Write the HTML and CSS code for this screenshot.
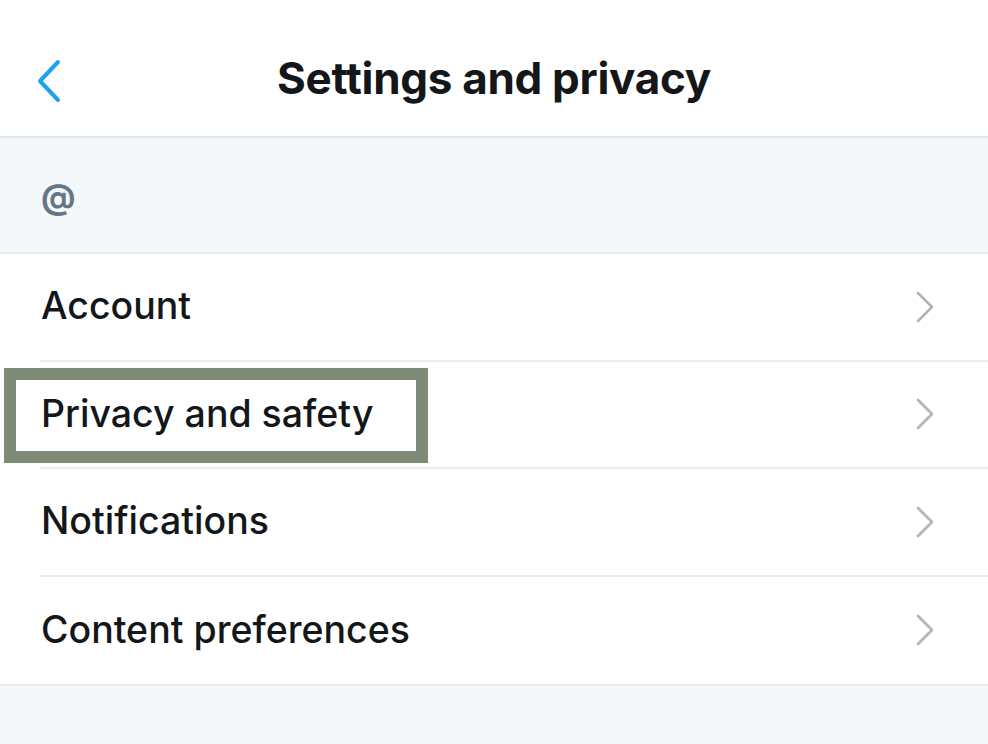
FILE: index.html
```html
<!DOCTYPE html>
<html>
<head>
<meta charset="utf-8">
<link rel="stylesheet" href="styles.css">
</head>
<body>
<div class="screen">
  <header class="topbar">
    <span class="back">
      <svg width="30" height="46" viewBox="0 0 30 46"><path d="M24 4 L6 23 L24 42" fill="none" stroke="#1da1f2" stroke-width="4" stroke-linecap="round" stroke-linejoin="round"/></svg>
    </span>
    <h1 class="title">Settings and privacy</h1>
  </header>
  <div class="handle">@</div>
  <ul class="list">
    <li class="row"><span class="label">Account</span><span class="chev"><svg width="22" height="34" viewBox="0 0 22 34"><path d="M4 3 L18 17 L4 31" fill="none" stroke="#adb5bc" stroke-width="2.6" stroke-linecap="round" stroke-linejoin="round"/></svg></span></li>
    <li class="row"><span class="label">Privacy and safety</span><span class="chev"><svg width="22" height="34" viewBox="0 0 22 34"><path d="M4 3 L18 17 L4 31" fill="none" stroke="#adb5bc" stroke-width="2.6" stroke-linecap="round" stroke-linejoin="round"/></svg></span><span class="highlight"></span></li>
    <li class="row"><span class="label">Notifications</span><span class="chev"><svg width="22" height="34" viewBox="0 0 22 34"><path d="M4 3 L18 17 L4 31" fill="none" stroke="#adb5bc" stroke-width="2.6" stroke-linecap="round" stroke-linejoin="round"/></svg></span></li>
    <li class="row last"><span class="label">Content preferences</span><span class="chev"><svg width="22" height="34" viewBox="0 0 22 34"><path d="M4 3 L18 17 L4 31" fill="none" stroke="#adb5bc" stroke-width="2.6" stroke-linecap="round" stroke-linejoin="round"/></svg></span></li>
  </ul>
  <div class="footer"></div>
</div>
</body>
</html>
```
FILE: styles.css
```css
* { box-sizing: border-box; }
html, body { margin: 0; padding: 0; }
body {
  width: 988px;
  height: 744px;
  overflow: hidden;
  background: #f5f8fa;
  font-family: Inter, "Noto Sans", sans-serif;
  color: #14171a;
}
.screen { display: flex; flex-direction: column; height: 744px; }
.topbar {
  height: 138px;
  background: #fff;
  border-bottom: 2px solid #e1e8ed;
  display: flex;
  align-items: center;
  justify-content: center;
  position: relative;
}
.back {
  position: absolute;
  left: 34px;
  top: 58px;
  display: flex;
}
.title {
  margin: 0;
  font-size: 44px;
  font-weight: 700;
  letter-spacing: -0.3px;
  padding-top: 20px;
}
.handle {
  height: 114px;
  background: #f5f8fa;
  display: flex;
  align-items: center;
  padding-left: 41px;
  font-size: 34px;
  font-weight: 700;
  color: #657786;
  padding-top: 2px;
}
.list {
  list-style: none;
  margin: 0;
  padding: 0 0 0 40px;
  background: #fff;
  border-top: 2px solid #e6ecf0;
  border-bottom: 2px solid #e6ecf0;
}
.row {
  position: relative;
  height: 107.5px;
  display: flex;
  align-items: center;
  justify-content: space-between;
  padding-right: 52px;
  border-bottom: 2px solid #e6ecf0;
}
.row.last { border-bottom: none; }
.label {
  font-size: 37.5px;
  font-weight: 500;
  padding-left: 1px;
  padding-bottom: 2px;
}
.chev { display: flex; }
.highlight {
  position: absolute;
  left: -36px;
  top: 6px;
  width: 424px;
  height: 95px;
  border: 12px solid #7d8a76;
}
.footer { flex: 1; background: #f5f8fa; }
```
